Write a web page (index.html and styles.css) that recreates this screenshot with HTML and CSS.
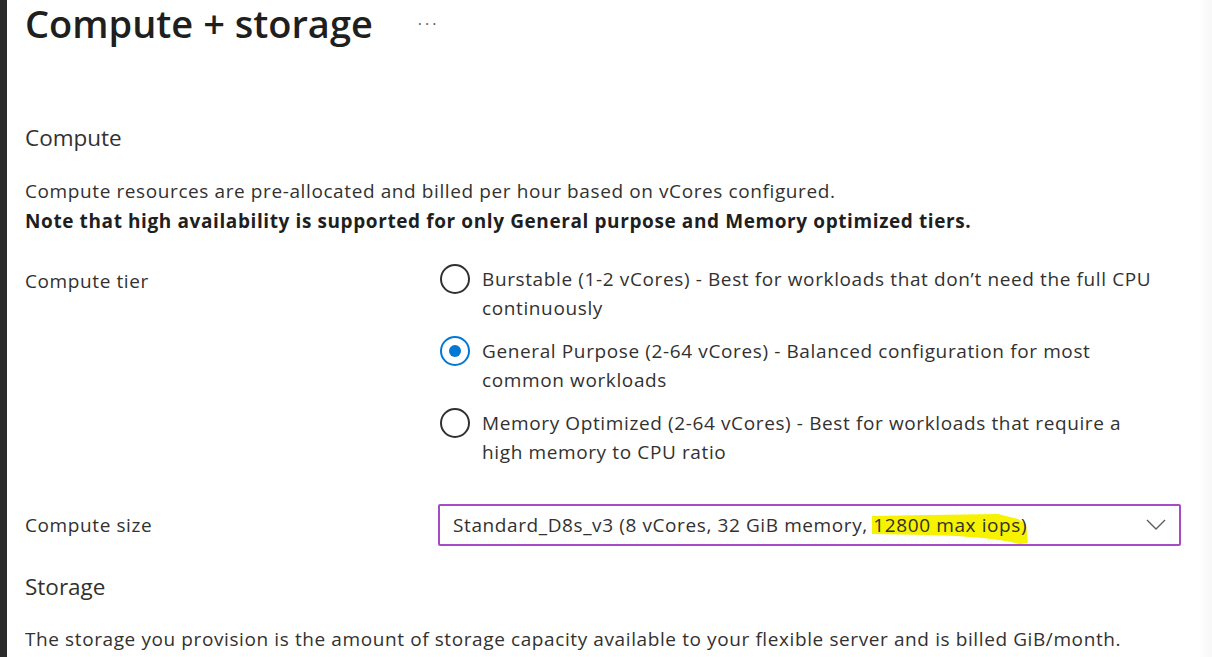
FILE: index.html
```html
<!DOCTYPE html>
<html>
<head>
<meta charset="utf-8">
<link rel="stylesheet" href="styles.css">
</head>
<body>
<div class="frame">
  <div class="strip"></div>
  <main class="content">
    <header class="title-row">
      <h1 class="title">Compute + storage</h1>
      <span class="more">···</span>
    </header>

    <h2 class="section">Compute</h2>
    <p class="desc">Compute resources are pre-allocated and billed per hour based on vCores configured.<br><strong>Note that high availability is supported for only General purpose and Memory optimized tiers.</strong></p>

    <div class="row row-tier">
      <div class="label">Compute tier</div>
      <div class="radios">
        <div class="radio"><span class="circle"></span><span class="rtext">Burstable (1-2 vCores) - Best for workloads that don’t need the full CPU<br>continuously</span></div>
        <div class="radio"><span class="circle checked"></span><span class="rtext">General Purpose (2-64 vCores) - Balanced configuration for most<br>common workloads</span></div>
        <div class="radio"><span class="circle"></span><span class="rtext">Memory Optimized (2-64 vCores) - Best for workloads that require a<br>high memory to CPU ratio</span></div>
      </div>
    </div>

    <div class="row row-size">
      <div class="label">Compute size</div>
      <div class="select">
        <span class="stext">Standard_D8s_v3 (8 vCores, 32 GiB memory, <span class="hl">12800 max iops)<svg class="mark" viewBox="0 0 160 32"><path d="M2 3 L60 2 L128 1 L148 6 L156 11 L158 30 L150 31 C128 26 100 23 60 22 L2 21 Z" fill="#f6f200"/></svg></span></span>
        <svg class="chev" viewBox="0 0 20 12"><path d="M1 1 L10 10 L19 1" fill="none" stroke="#605e5c" stroke-width="1.4"/></svg>
      </div>
    </div>

    <h2 class="section storage">Storage</h2>
    <p class="desc">The storage you provision is the amount of storage capacity available to your flexible server and is billed GiB/month.</p>
  </main>
</div>
</body>
</html>
```

FILE: styles.css
```css
html, body {
  margin: 0;
  padding: 0;
  background: #ffffff;
}
body {
  font-family: "Open Sans", "Noto Sans", sans-serif;
  color: #323130;
  width: 1212px;
  height: 657px;
  overflow: hidden;
}
.frame {
  display: flex;
  height: 657px;
}
.strip {
  width: 7px;
  background: #2b2b2b;
  flex: none;
}
.content {
  flex: 1;
  padding-left: 18px;
  padding-right: 30px;
  background: linear-gradient(to right, #ffffff calc(100% - 14px), #f7f7f7 100%);
}
.title-row {
  display: flex;
  align-items: center;
  height: 44px;
  padding-top: 2px;
  box-sizing: border-box;
}
.title {
  margin: 0;
  font-size: 38px;
  line-height: 42px;
  font-weight: 600;
  color: #201f1e;
}
.more {
  margin-left: 45px;
  font-size: 16px;
  letter-spacing: 3px;
  color: #605e5c;
  margin-top: 2px;
}
.section {
  margin: 80px 0 0;
  font-size: 22.5px;
  font-weight: 400;
  line-height: 28px;
}
.desc {
  margin: 24px 0 0;
  font-size: 19px;
  letter-spacing: 0.6px;
  line-height: 30px;
}
.desc strong {
  font-weight: 700;
  color: #201f1e;
}
.row {
  display: grid;
  grid-template-columns: 413px 743px;
}
.label {
  font-size: 19px;
  letter-spacing: 0.6px;
  line-height: 29px;
}
.row-tier {
  margin-top: 29px;
}
.row-tier .label {
  padding-top: 2px;
}
.radios {
  display: flex;
  flex-direction: column;
  gap: 14px;
}
.radio {
  display: flex;
  gap: 12px;
}
.circle {
  flex: none;
  width: 30px;
  height: 30px;
  border: 2px solid #323130;
  border-radius: 50%;
  margin-left: 2px;
  margin-top: -1px;
  box-sizing: border-box;
  position: relative;
}
.circle.checked {
  border-color: #0078d4;
}
.circle.checked::after {
  content: "";
  position: absolute;
  left: 7px;
  top: 7px;
  width: 12px;
  height: 12px;
  border-radius: 50%;
  background: #0078d4;
}
.rtext {
  font-size: 19px;
  letter-spacing: 0.62px;
  line-height: 29px;
  width: 700px;
  white-space: nowrap;
}
.row-size {
  margin-top: 37px;
  align-items: center;
}
.select {
  height: 42px;
  box-sizing: border-box;
  border: 2px solid #a64bc6;
  border-radius: 2px;
  display: flex;
  align-items: center;
  justify-content: space-between;
  padding: 0 12px 0 13px;
}
.stext {
  font-size: 19px;
  letter-spacing: 0.6px;
  line-height: 24px;
  white-space: nowrap;
}
.hl {
  position: relative;
  z-index: 0;
}
.mark {
  position: absolute;
  left: -3px;
  top: 1px;
  width: 160px;
  height: 32px;
  z-index: -1;
}
.chev {
  width: 20px;
  height: 12px;
  margin-right: 1px;
}
.section.storage {
  margin-top: 27px;
}
.storage + .desc {
  margin-top: 23px;
}
```
